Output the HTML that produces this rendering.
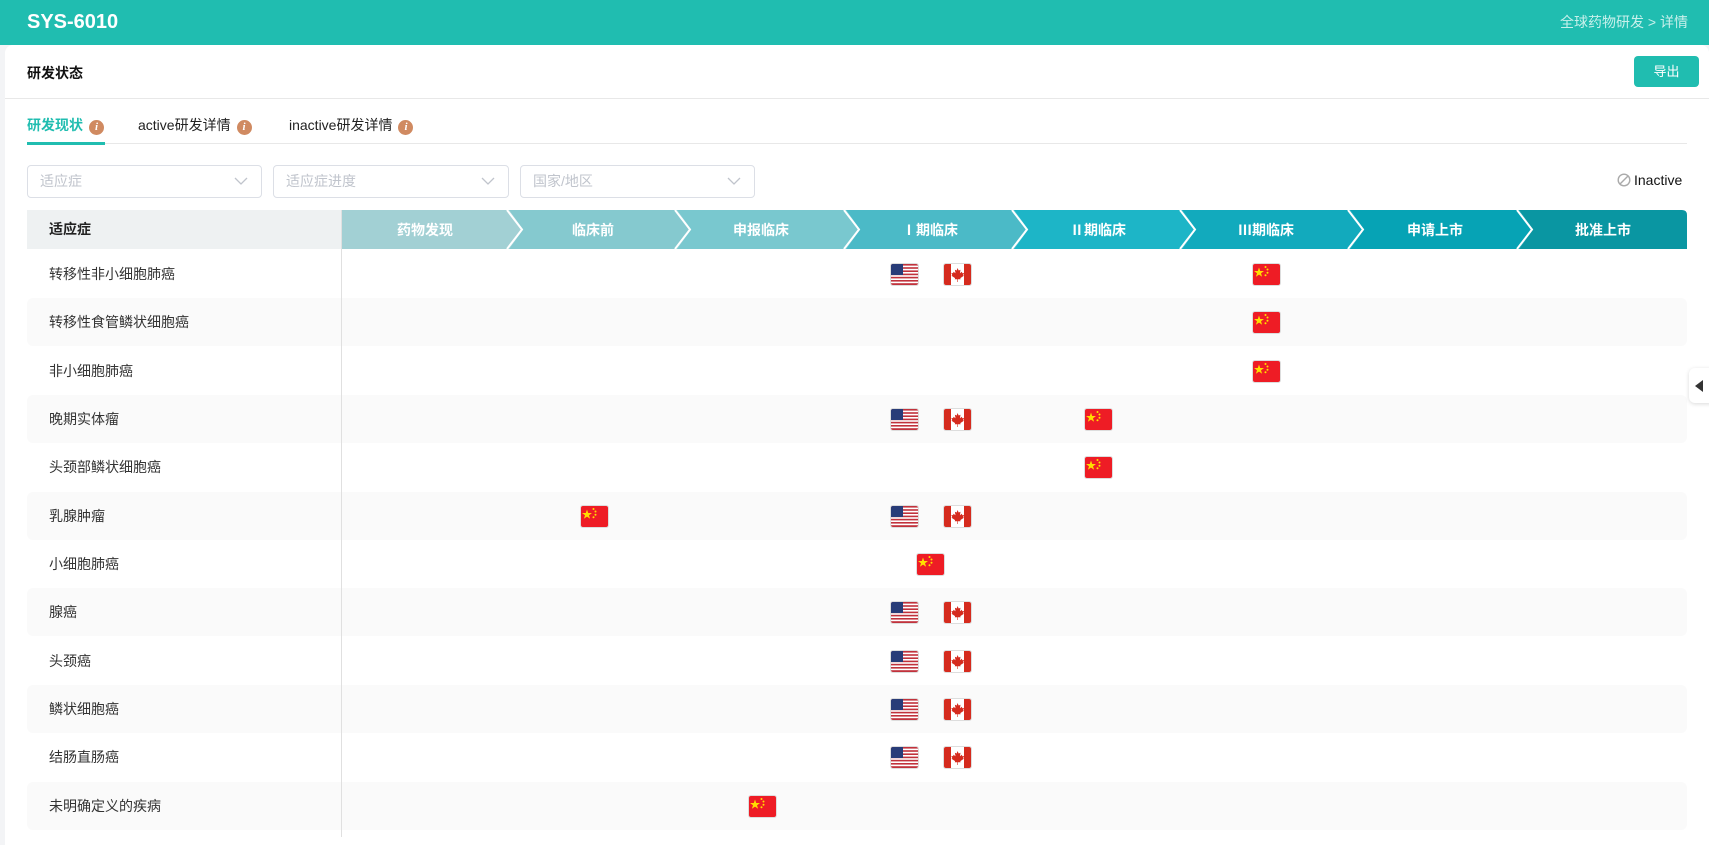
<!DOCTYPE html>
<html><head><meta charset="utf-8">
<style>
*{box-sizing:border-box;margin:0;padding:0}
body{width:1709px;height:837px;overflow:hidden;background:#f3f4f6;font-family:"Liberation Sans","Noto Sans CJK SC",sans-serif;position:relative}
.top{position:absolute;left:0;top:0;width:1709px;height:45px;background:#20bdb0}
.top .t{position:absolute;left:27px;top:10px;color:#fff;font-weight:bold;font-size:20px;line-height:24px}
.top .bc{position:absolute;right:21px;top:12px;color:#c8f0eb;font-size:14px}
.card{position:absolute;left:5px;top:45px;width:1704px;height:800px;background:#fff;border-radius:8px 8px 0 0}
.h1{position:absolute;left:27px;top:63px;font-size:14px;font-weight:bold;color:#111}
.btn{position:absolute;left:1634px;top:56px;width:65px;height:31px;border-radius:4px;background:#20bdb0;color:#fff;font-size:13px;text-align:center;line-height:31px}
.sep{position:absolute;left:5px;top:98px;width:1704px;height:1px;background:#e8e8e8}
.tabs{position:absolute;left:27px;top:115px;font-size:14px;color:#222}
.tab{position:absolute;white-space:nowrap}
.info{display:inline-block;width:15px;height:15px;border-radius:50%;background:#d08a61;color:#fff;font-size:11px;font-weight:bold;font-style:italic;text-align:center;line-height:15px;vertical-align:0px;margin-left:6px;font-family:"Liberation Serif",serif}
.tabline{position:absolute;left:27px;top:143px;width:1660px;height:1px;background:#e8e8e8}
.ul{position:absolute;left:27px;top:142px;width:78px;height:3px;background:#20bdb0}
.sel{position:absolute;top:165px;height:33px;border:1px solid #dcdfe6;border-radius:4px;color:#c0c4cc;font-size:14px;padding-left:12px;line-height:31px}
.sel svg{position:absolute;right:13px;top:11px}
.inact{position:absolute;left:1617px;top:172px;font-size:14px;color:#111}
.thl{position:absolute;left:27px;top:210px;width:315px;height:39px;background:#eef1f2;font-size:14px;font-weight:bold;color:#222;padding-left:22px;line-height:39px}
.stages{position:absolute;left:341px;top:210px}
.row{position:absolute;left:27px;width:1660px;height:48px;border-radius:6px;font-size:14px;color:#333;padding-left:22px;line-height:48px}
.row.alt{background:#fafafa}
.vl{position:absolute;left:341px;top:210px;width:1px;height:627px;background:#e0e0e0}
.f{position:absolute;width:27px;height:21px;border-radius:2px;overflow:hidden;box-shadow:0 0 0 1px #ddd}
.side{position:absolute;left:1689px;top:368px;width:24px;height:35px;background:#fff;border-radius:6px 0 0 6px;box-shadow:0 1px 4px rgba(0,0,0,.15)}
</style></head><body>
<div class="top"><div class="t">SYS-6010</div><div class="bc">全球药物研发 &gt; 详情</div></div>
<div class="card"></div>
<div class="h1">研发状态</div>
<div class="btn">导出</div>
<div class="sep"></div>
<div class="tabs">
<div class="tab" style="left:0;color:#20bdb0;font-weight:bold">研发现状<span class="info">i</span></div>
<div class="tab" style="left:111px">active研发详情<span class="info">i</span></div>
<div class="tab" style="left:262px">inactive研发详情<span class="info">i</span></div>
</div>
<div class="tabline"></div><div class="ul"></div>
<div class="sel" style="left:27px;width:235px">适应症<svg width="14" height="9"><path d="M1 1l6 6 6-6" stroke="#c0c4cc" fill="none" stroke-width="1.3"/></svg></div>
<div class="sel" style="left:273px;width:236px">适应症进度<svg width="14" height="9"><path d="M1 1l6 6 6-6" stroke="#c0c4cc" fill="none" stroke-width="1.3"/></svg></div>
<div class="sel" style="left:520px;width:235px">国家/地区<svg width="14" height="9"><path d="M1 1l6 6 6-6" stroke="#c0c4cc" fill="none" stroke-width="1.3"/></svg></div>
<div class="inact"><svg width="14" height="14" style="vertical-align:-2px;margin-right:3px"><circle cx="7" cy="7" r="5.8" stroke="#aaa" stroke-width="1.4" fill="none"/><path d="M3 11L11 3" stroke="#aaa" stroke-width="1.4"/></svg>Inactive</div>
<div class="thl">适应症</div>
<svg class="stages" width="1346" height="39" font-family="Noto Sans CJK SC,sans-serif" font-size="14" font-weight="bold">
<polygon points="0,0 168,0 182,19.5 168,39 0,39" fill="#a2d0d4"/>
<polygon points="168,0 336,0 350,19.5 336,39 168,39 182,19.5" fill="#85c9cf"/>
<polygon points="336,0 505,0 519,19.5 505,39 336,39 350,19.5" fill="#79c8cf"/>
<polygon points="505,0 673,0 687,19.5 673,39 505,39 519,19.5" fill="#4bbac7"/>
<polygon points="673,0 841,0 855,19.5 841,39 673,39 687,19.5" fill="#1db5c7"/>
<polygon points="841,0 1009,0 1023,19.5 1009,39 841,39 855,19.5" fill="#12aabd"/>
<polygon points="1009,0 1178,0 1192,19.5 1178,39 1009,39 1023,19.5" fill="#06a3b5"/>
<path d="M1178,0 H1341 Q1346,0 1346,5 V39 H1178 L1192,19.5Z" fill="#0a96a2"/>
<g stroke="#fff" stroke-width="2" fill="none">
<polyline points="166,0 181,19.5 166,39"/><polyline points="334,0 349,19.5 334,39"/><polyline points="503,0 518,19.5 503,39"/><polyline points="671,0 686,19.5 671,39"/><polyline points="839,0 854,19.5 839,39"/><polyline points="1007,0 1022,19.5 1007,39"/><polyline points="1176,0 1191,19.5 1176,39"/>
</g>
<g fill="#fff" text-anchor="middle">
<text x="84" y="25">药物发现</text><text x="252" y="25">临床前</text><text x="420" y="25">申报临床</text><text x="589" y="25">Ⅰ期临床</text><text x="757" y="25">Ⅱ期临床</text><text x="925" y="25">Ⅲ期临床</text><text x="1094" y="25">申请上市</text><text x="1262" y="25">批准上市</text>
</g>
</svg>
<div class="row" style="top:250px">转移性非小细胞肺癌</div>
<div class="row alt" style="top:298px">转移性食管鳞状细胞癌</div>
<div class="row" style="top:347px">非小细胞肺癌</div>
<div class="row alt" style="top:395px">晚期实体瘤</div>
<div class="row" style="top:443px">头颈部鳞状细胞癌</div>
<div class="row alt" style="top:492px">乳腺肿瘤</div>
<div class="row" style="top:540px">小细胞肺癌</div>
<div class="row alt" style="top:588px">腺癌</div>
<div class="row" style="top:637px">头颈癌</div>
<div class="row alt" style="top:685px">鳞状细胞癌</div>
<div class="row" style="top:733px">结肠直肠癌</div>
<div class="row alt" style="top:782px">未明确定义的疾病</div>
<div class="vl"></div>
<svg width="0" height="0" style="position:absolute">
<defs>
<g id="us"><rect width="27" height="21" fill="#fff"/><g fill="#c1323c"><rect y="0" width="27" height="1.6"/><rect y="3.2" width="27" height="1.6"/><rect y="6.4" width="27" height="1.6"/><rect y="9.6" width="27" height="1.6"/><rect y="12.8" width="27" height="1.6"/><rect y="16" width="27" height="1.6"/><rect y="19.2" width="27" height="1.8"/></g><rect width="12" height="11" fill="#283c78"/></g>
<g id="ca"><rect width="27" height="21" fill="#fff"/><rect width="7" height="21" fill="#d52b1e"/><rect x="20" width="7" height="21" fill="#d52b1e"/><path d="M13.5 4l1.2 2.5 1.8-.8-.6 3.5 2-1.5.4 1.5 1.8-.3-1 2.2.8.6-3.6 2.4.3 1.2h-2.6V18h-.6v-2.7h-2.6l.3-1.2-3.6-2.4.8-.6-1-2.2 1.8.3.4-1.5 2 1.5-.6-3.5 1.8.8z" fill="#d52b1e"/></g>
<g id="cn"><rect width="27" height="21" fill="#ee1c25"/><polygon points="6,3.5 7.2,7 11,7 8,9.2 9.1,12.8 6,10.6 2.9,12.8 4,9.2 1,7 4.8,7" fill="#ffde00"/><g fill="#ffde00"><circle cx="12.5" cy="3" r="1"/><circle cx="14.5" cy="5.5" r="1"/><circle cx="14.5" cy="8.7" r="1"/><circle cx="12.5" cy="11.2" r="1"/></g></g>
</defs></svg>
<svg class="f" style="left:891px;top:264px"><use href="#us"/></svg><svg class="f" style="left:944px;top:264px"><use href="#ca"/></svg><svg class="f" style="left:1253px;top:264px"><use href="#cn"/></svg>
<svg class="f" style="left:1253px;top:312px"><use href="#cn"/></svg>
<svg class="f" style="left:1253px;top:361px"><use href="#cn"/></svg>
<svg class="f" style="left:891px;top:409px"><use href="#us"/></svg><svg class="f" style="left:944px;top:409px"><use href="#ca"/></svg><svg class="f" style="left:1085px;top:409px"><use href="#cn"/></svg>
<svg class="f" style="left:1085px;top:457px"><use href="#cn"/></svg>
<svg class="f" style="left:581px;top:506px"><use href="#cn"/></svg><svg class="f" style="left:891px;top:506px"><use href="#us"/></svg><svg class="f" style="left:944px;top:506px"><use href="#ca"/></svg>
<svg class="f" style="left:917px;top:554px"><use href="#cn"/></svg>
<svg class="f" style="left:891px;top:602px"><use href="#us"/></svg><svg class="f" style="left:944px;top:602px"><use href="#ca"/></svg>
<svg class="f" style="left:891px;top:651px"><use href="#us"/></svg><svg class="f" style="left:944px;top:651px"><use href="#ca"/></svg>
<svg class="f" style="left:891px;top:699px"><use href="#us"/></svg><svg class="f" style="left:944px;top:699px"><use href="#ca"/></svg>
<svg class="f" style="left:891px;top:747px"><use href="#us"/></svg><svg class="f" style="left:944px;top:747px"><use href="#ca"/></svg>
<svg class="f" style="left:749px;top:796px"><use href="#cn"/></svg>
<div class="side"><svg width="12" height="14" style="position:absolute;left:4px;top:11px"><path d="M10 1L2 7l8 6z" fill="#333"/></svg></div>
</body></html>
